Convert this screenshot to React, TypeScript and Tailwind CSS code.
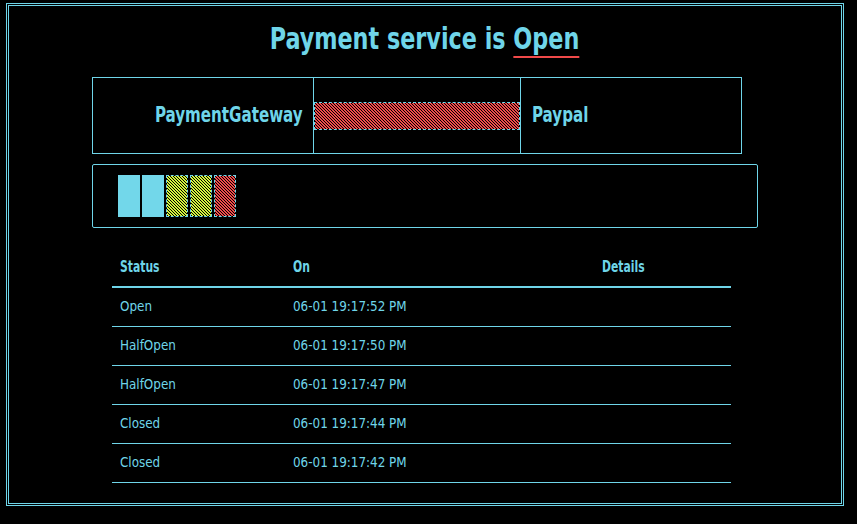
import React from "react";

const font = {
  fontFamily: '"DejaVu Sans Condensed", "DejaVu Sans", sans-serif',
};

const events = [
  { status: "Open", on: "06-01 19:17:52 PM" },
  { status: "HalfOpen", on: "06-01 19:17:50 PM" },
  { status: "HalfOpen", on: "06-01 19:17:47 PM" },
  { status: "Closed", on: "06-01 19:17:44 PM" },
  { status: "Closed", on: "06-01 19:17:42 PM" },
];

// striped fill, 1px black diagonal every 3px
function Hatch({ color, id }: { color: string; id: string }) {
  return (
    <svg className="absolute inset-0 w-full h-full" shapeRendering="crispEdges">
      <defs>
        <pattern id={id} width="3" height="3" patternUnits="userSpaceOnUse">
          <rect width="3" height="3" fill={color} />
          <rect x="0" y="0" width="1" height="1" fill="#000" />
          <rect x="1" y="1" width="1" height="1" fill="#000" />
          <rect x="2" y="2" width="1" height="1" fill="#000" />
        </pattern>
      </defs>
      <rect width="100%" height="100%" fill={`url(#${id})`} />
    </svg>
  );
}

export default function App() {
  return (
    <div className="w-[857px] h-[524px] bg-black pt-[3px] pl-[6px] text-[#6fd5e9]" style={font}>
      <div className="w-[838px] h-[503px] border-[3px] border-double border-[#6fd5e9] flex flex-col">
        {/* title */}
        <div className="h-[71px] flex items-center justify-center pb-[6px]">
          <h1 className="text-[31px] font-bold whitespace-nowrap inline-block scale-x-[0.8] origin-center">
            Payment service is{" "}
            <span className="underline decoration-[#f04a4a] decoration-2 underline-offset-[7px]">Open</span>
          </h1>
        </div>

        {/* circuit panel */}
        <div className="ml-[83px] w-[650px] h-[77px] border border-[#6fd5e9] flex text-[21px] font-bold">
          <div className="w-[221px] border-r border-[#6fd5e9] flex items-center justify-end pr-[10px]">
            <span className="inline-block scale-x-[0.8] origin-right">PaymentGateway</span>
          </div>
          <div className="w-[207px] border-r border-[#6fd5e9] flex items-center">
            <div className="relative w-full h-[28px] border border-dashed border-[#6fd5e9]">
              <Hatch color="#f04a4a" id="h-link" />
            </div>
          </div>
          <div className="w-[220px] flex items-center pl-[11px]">
            <span className="inline-block scale-x-[0.8] origin-left">Paypal</span>
          </div>
        </div>

        {/* history bars */}
        <div className="ml-[83px] mt-[10px] w-[666px] h-[64px] border border-[#6fd5e9] rounded-[2px] pl-[25px] pt-[10px] flex gap-[2px]">
          <div className="w-[22px] h-[42px] bg-[#72d7ea]" />
          <div className="w-[22px] h-[42px] bg-[#72d7ea]" />
          <div className="relative w-[22px] h-[42px] border border-dashed border-[#6fd5e9]">
            <Hatch color="#d4f53c" id="h-y1" />
          </div>
          <div className="relative w-[22px] h-[42px] border border-dashed border-[#6fd5e9]">
            <Hatch color="#d4f53c" id="h-y2" />
          </div>
          <div className="relative w-[22px] h-[42px] border border-dashed border-[#6fd5e9]">
            <Hatch color="#f04a4a" id="h-r1" />
          </div>
        </div>

        {/* events table */}
        <table className="ml-[103px] mt-[20px] w-[619px] border-collapse text-[14px]">
          <thead>
            <tr className="h-[39px] border-b-2 border-[#6fd5e9] text-left text-[15px]">
              <th className="w-[173px] pl-[8px] font-bold">
                <span className="inline-block scale-x-[0.8] origin-left">Status</span>
              </th>
              <th className="w-[309px] pl-[8px] font-bold">
                <span className="inline-block scale-x-[0.8] origin-left">On</span>
              </th>
              <th className="pl-[8px] font-bold">
                <span className="inline-block scale-x-[0.8] origin-left">Details</span>
              </th>
            </tr>
          </thead>
          <tbody>
            {events.map((e, i) => (
              <tr key={i} className="h-[39px] border-b border-[#6fd5e9]">
                <td className="pl-[8px]">
                  <span className="inline-block scale-x-[0.95] origin-left">{e.status}</span>
                </td>
                <td className="pl-[8px]">
                  <span className="inline-block scale-x-[0.95] origin-left">{e.on}</span>
                </td>
                <td className="pl-[8px]"></td>
              </tr>
            ))}
          </tbody>
        </table>
      </div>
    </div>
  );
}
